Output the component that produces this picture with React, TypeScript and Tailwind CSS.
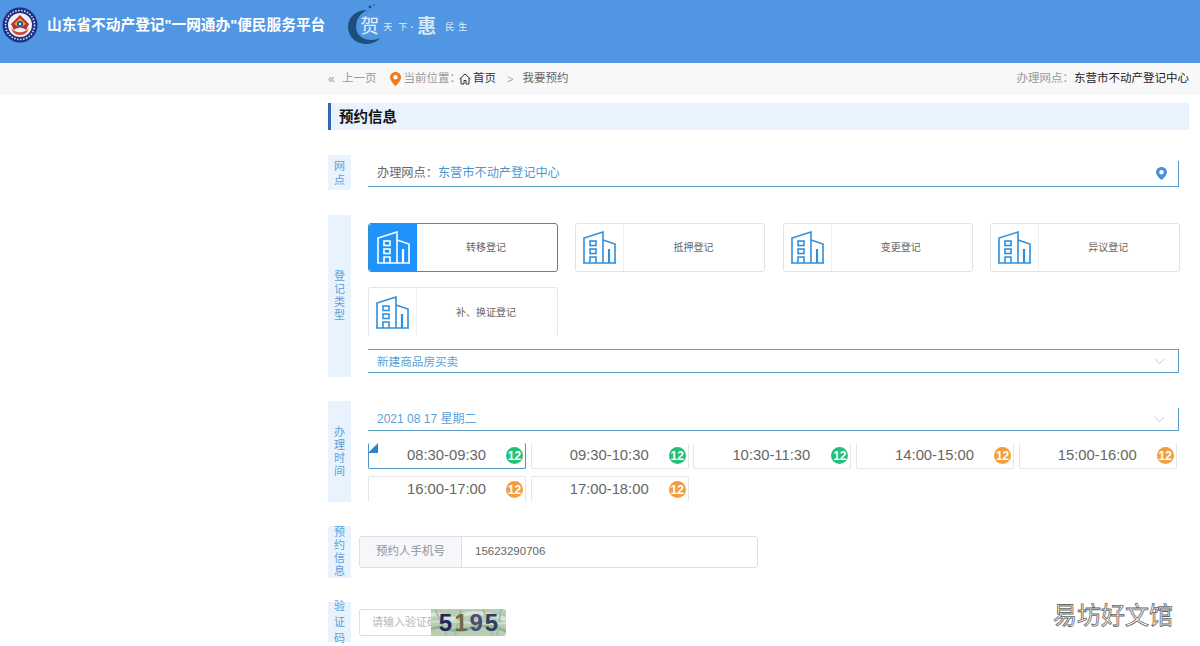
import React from 'react';

const FONT = 'font-["Liberation_Sans","Noto_Sans_CJK_SC",sans-serif]';

const cards = ['转移登记', '抵押登记', '变更登记', '异议登记', '补、换证登记'];

const slots = [
	{ time: '08:30-09:30', color: 'bg-[#22c17a]' },
	{ time: '09:30-10:30', color: 'bg-[#22c17a]' },
	{ time: '10:30-11:30', color: 'bg-[#22c17a]' },
	{ time: '14:00-15:00', color: 'bg-[#f49d3f]' },
	{ time: '15:00-16:00', color: 'bg-[#f49d3f]' },
	{ time: '16:00-17:00', color: 'bg-[#f49d3f]' },
	{ time: '17:00-18:00', color: 'bg-[#f49d3f]' },
];

const captcha = [
	{ c: '5', color: 'text-[#23265c]' },
	{ c: '1', color: 'text-[#6d6a3f]' },
	{ c: '9', color: 'text-[#4b4a78]' },
	{ c: '5', color: 'text-[#2c3f5c]' },
];

const Building = ({ stroke }: { stroke: string }) => (
	<svg width="33" height="33" viewBox="0 0 33 33" fill="none" stroke={stroke} strokeWidth="1.6">
		<path d="M1 32V7L20 1V32" />
		<path d="M20 9L32 13V32" />
		<path d="M0 32H33" />
		<rect x="7" y="10" width="6" height="4.5" />
		<rect x="7" y="18" width="6" height="4.5" />
		<path d="M7 32V26H13V32" />
		<path d="M26 18V32" strokeWidth="2.2" />
	</svg>
);

const SideLabel = ({ text, className }: { text: string; className: string }) => (
	<div className={`w-[23px] shrink-0 bg-[#e8f3fd] flex flex-col items-center justify-center text-[11px] text-[#5c9fd6] ${className}`}>
		{text.split('').map((c, i) => (
			<span key={i}>{c}</span>
		))}
	</div>
);

const Chevron = () => (
	<svg width="11" height="7" viewBox="0 0 11 7" fill="none" stroke="#c4c8cf" strokeWidth="1">
		<path d="M1 1L5.5 5.5L10 1" />
	</svg>
);

const Logo = () => (
	<svg width="36" height="36" viewBox="0 0 36 36">
		<circle cx="18" cy="18" r="17.5" fill="#1c2f86" />
		<circle cx="18" cy="18" r="14.5" fill="none" stroke="#dfe6f5" strokeWidth="1.6" strokeDasharray="1.5 1.5" />
		<circle cx="18" cy="18" r="12" fill="#f0eef0" />
		<path d="M18 8L27 17L24 23C21 20 15 20 12 23L9 17Z" fill="#b8322f" />
		<path d="M9 20C12 27 24 27 27 20L25 25C22 29 14 29 11 25Z" fill="#c8412f" />
		<path d="M18 11L24 17L18 21L12 17Z" fill="#e8a33c" />
		<circle cx="18" cy="17" r="3" fill="#1c4f9c" />
		<circle cx="18" cy="17" r="1.2" fill="#fff" />
	</svg>
);

const Crescent = () => (
	<svg width="34" height="44" viewBox="0 0 34 44" className="absolute left-0 top-0">
		<path d="M20 7C9 7 1 14 1 24C1 35 11 42 21 41C27 40 31 38 33 35C27 38 17 38 12 32C7 26 8 13 20 7Z" fill="#1d4f7d" />
		<circle cx="23" cy="4" r="1.4" fill="#1d4f7d" />
		<circle cx="27" cy="2" r="0.8" fill="#1d4f7d" />
	</svg>
);

// the captcha is a noisy picture in the original
const CaptchaNoise = () => (
	<svg width="75" height="27" viewBox="0 0 75 27" className="absolute inset-0">
		<rect width="75" height="27" fill="#b7cdb4" />
		<path d="M0 6C10 2 16 14 28 8S50 3 75 10" stroke="#d8e6d4" strokeWidth="4" fill="none" />
		<path d="M0 20C14 14 20 26 36 20S60 16 75 22" stroke="#94b394" strokeWidth="3" fill="none" />
		<path d="M4 0L16 27M30 0L24 27M52 0L62 27M70 0L66 27" stroke="#a3bfa2" strokeWidth="2" fill="none" />
		<path d="M0 13C20 10 50 17 75 14" stroke="#cfe0cc" strokeWidth="2" fill="none" />
	</svg>
);

export default function App() {
	return (
		<div className={`relative w-[1200px] h-[646px] overflow-hidden bg-white ${FONT}`}>
			<header className="h-[63px] bg-[#5096e3] flex items-start pl-[2px] pt-[7px]">
				<Logo />
				<h1 className="ml-[9px] mt-[1px] text-[14.7px] leading-[34px] font-bold text-white whitespace-nowrap">
					山东省不动产登记"一网通办"便民服务平台
				</h1>
				<div className="relative ml-[22px] h-[44px] w-[120px] -mt-[4px]">
					<Crescent />
					<div className="absolute left-[13px] top-[10px] flex items-center whitespace-nowrap text-[#e2edf9] font-['Liberation_Serif','Noto_Sans_CJK_SC',serif]">
						<span className="text-[19px] w-[23px]">贺</span>
						<span className="text-[9px] w-[15px]">天</span>
						<span className="text-[9px] w-[12px]">下</span>
						<span className="text-[10px] w-[7px] font-bold">·</span>
						<span className="text-[19px] font-bold w-[28px] text-[#d5e6f7]">惠</span>
						<span className="text-[9px] w-[13px]">民</span>
						<span className="text-[9px]">生</span>
					</div>
				</div>
			</header>

			<div className="h-[32px] bg-[#f8f8f8] pl-[328px] pr-[11px] flex items-center justify-between text-[11.5px] text-[#9a9a9a] whitespace-nowrap">
				<div className="flex items-center">
					<span className="text-[12px] w-[14px]">«</span>
					<span>上一页</span>
					<svg width="11" height="14" viewBox="0 0 11 14" className="ml-[13px] mr-[3px]">
						<path d="M5.5 0C2.4 0 0 2.4 0 5.4C0 9 5.5 14 5.5 14C5.5 14 11 9 11 5.4C11 2.4 8.6 0 5.5 0Z" fill="#ee7a1c" />
						<circle cx="5.5" cy="5.3" r="2.2" fill="#fff" />
					</svg>
					<span>当前位置：</span>
					<svg width="12" height="12" viewBox="0 0 12 12" fill="none" stroke="#333" strokeWidth="1" className="-ml-[2px] mr-[2px]">
						<path d="M0.5 6L6 1L11.5 6M2 5V11H5V7.5H7V11H10V5" />
					</svg>
					<span className="text-[#333]">首页</span>
					<span className="ml-[11px] text-[#aaa] text-[11px]">&gt;</span>
					<span className="ml-[9px] text-[#666]">我要预约</span>
				</div>
				<div>
					办理网点：<span className="text-[#222]">东营市不动产登记中心</span>
				</div>
			</div>

			<main className="ml-[328px] w-[861px] pt-[8px]">
				<div className="h-[27px] bg-[#e8f3fd] border-l-[3px] border-[#2f68ac] pl-[8px] text-[14.5px] leading-[28px] font-bold text-[#111]">
					预约信息
				</div>

				<section className="mt-[25px] flex">
					<SideLabel text="网点" className="h-[35px] leading-[14px]" />
					<div className="ml-[17px] mt-[6px] w-[811px] h-[26px] border-b border-r border-[#5a9cc4] flex items-center justify-between pl-[9px] pr-[11px] text-[12.2px]">
						<span className="text-[#666]">
							办理网点：<span className="text-[#4f96cf]">东营市不动产登记中心</span>
						</span>
						<svg width="11" height="13" viewBox="0 0 11 13">
							<path d="M5.5 0C2.4 0 0 2.4 0 5.2C0 8.6 5.5 13 5.5 13C5.5 13 11 8.6 11 5.2C11 2.4 8.6 0 5.5 0Z" fill="#4b8ee0" />
							<circle cx="5.5" cy="5.2" r="2.2" fill="#fff" />
						</svg>
					</div>
				</section>

				<section className="mt-[25px] flex h-[162px]">
					<SideLabel text="登记类型" className="h-full leading-[13px]" />
					<div className="ml-[17px] w-[813px] pt-[8px]">
						<div className="flex flex-wrap gap-x-[17.4px] gap-y-[15px]">
							{cards.map((label, i) => (
								<div
									key={label}
									className={`w-[190px] h-[49px] flex items-center rounded-[3px] ${
										i === 0
											? 'border border-[#2f8fd0]'
											: i === 4
												? 'border border-b-0 border-[#e2e6ea]'
												: 'border border-[#dfe3e8]'
									}`}
								>
									<div className={`w-[48px] h-full flex items-center justify-center shrink-0 rounded-l-[3px] ${i === 0 ? 'bg-[#1f93fb]' : 'border-r border-[#eef0f2]'}`}>
										<Building stroke={i === 0 ? '#ffffff' : '#2f8fdc'} />
									</div>
									<span className="flex-1 text-center text-[10px] text-[#666] pr-[2px]">{label}</span>
								</div>
							))}
						</div>
						<div className="mt-[13px] w-[811px] h-[24px] border-y border-r border-[#5a9cc4] flex items-center justify-between pl-[9px] pr-[13px] text-[11.6px] text-[#5c9fd6]">
							<span className="pt-[2px]">新建商品房买卖</span>
							<Chevron />
						</div>
					</div>
				</section>

				<section className="mt-[24px] flex h-[101px]">
					<SideLabel text="办理时间" className="h-full leading-[13px]" />
					<div className="ml-[17px] w-[813px] pt-[7px]">
						<div className="w-[811px] h-[23px] border-b border-r border-[#5a9cc4] flex items-center justify-between pl-[9px] pr-[13px] text-[12px] text-[#5c9fd6]">
							<span>2021 08 17 星期二</span>
							<Chevron />
						</div>
						<div className="mt-[12px] flex flex-wrap gap-x-[4.7px] gap-y-[7px]">
							{slots.map((s, i) => (
								<div
									key={s.time}
									className={`relative w-[158px] h-[26px] flex items-center rounded-[2px] text-[14.8px] text-[#666] ${
										i === 0
											? 'border-x border-b border-[#4f93c4]'
											: i > 4
												? 'border-x border-t border-[#e2e6ea]'
												: 'border-x border-b border-[#e2e6ea]'
									}`}
								>
									{i === 0 && (
										<div className="absolute -left-px top-0 w-0 h-0 border-b-[10px] border-l-[10px] border-b-[#2f80d0] border-l-transparent" />
									)}
									<span className="w-[154px] pl-[38px] whitespace-nowrap">{s.time}</span>
									<span className={`absolute right-[2px] top-[4px] w-[17px] h-[17px] rounded-full flex items-center justify-center text-[12px] font-bold text-white ${s.color}`}>
										12
									</span>
								</div>
							))}
						</div>
					</div>
				</section>

				<section className="mt-[24px] flex">
					<SideLabel text="预约信息" className="h-[52px] leading-[13px]" />
					<div className="ml-[8px] mt-[10px] w-[399px] h-[32px] border border-[#dcdfe6] rounded-[3px] flex text-[11.5px]">
						<div className="w-[102px] bg-[#f5f7fa] border-r border-[#dcdfe6] flex items-center justify-center text-[#909399] rounded-l-[3px]">
							预约人手机号
						</div>
						<div className="pl-[13px] flex items-center text-[#666]">15623290706</div>
					</div>
				</section>

				<section className="mt-[24px] flex">
					<SideLabel text="验证码" className="h-[40px] leading-[16px]" />
					<div className="ml-[8px] mt-[7px] w-[147px] h-[27px] flex">
						<div className="w-[72px] border border-r-0 border-[#dcdfe6] rounded-l-[3px] pl-[12px] flex items-center overflow-hidden whitespace-nowrap text-[11px] text-[#b5b8bf]">
							请输入验证码
						</div>
						<div className="relative w-[75px] rounded-r-[3px] overflow-hidden">
							<CaptchaNoise />
							<div className="absolute inset-0 flex items-center justify-center gap-[2px] text-[24px] leading-none font-bold font-['Liberation_Sans',sans-serif]">
								{captcha.map((d, i) => (
									<span key={i} className={d.color}>
										{d.c}
									</span>
								))}
							</div>
						</div>
					</div>
				</section>
			</main>

			<div className="absolute left-[1053px] top-[600px] text-[24px] leading-[28px] whitespace-nowrap text-white [-webkit-text-stroke:0.8px_#666] font-['Noto_Sans_CJK_SC',sans-serif]">
				易坊好文馆
			</div>
		</div>
	);
}
